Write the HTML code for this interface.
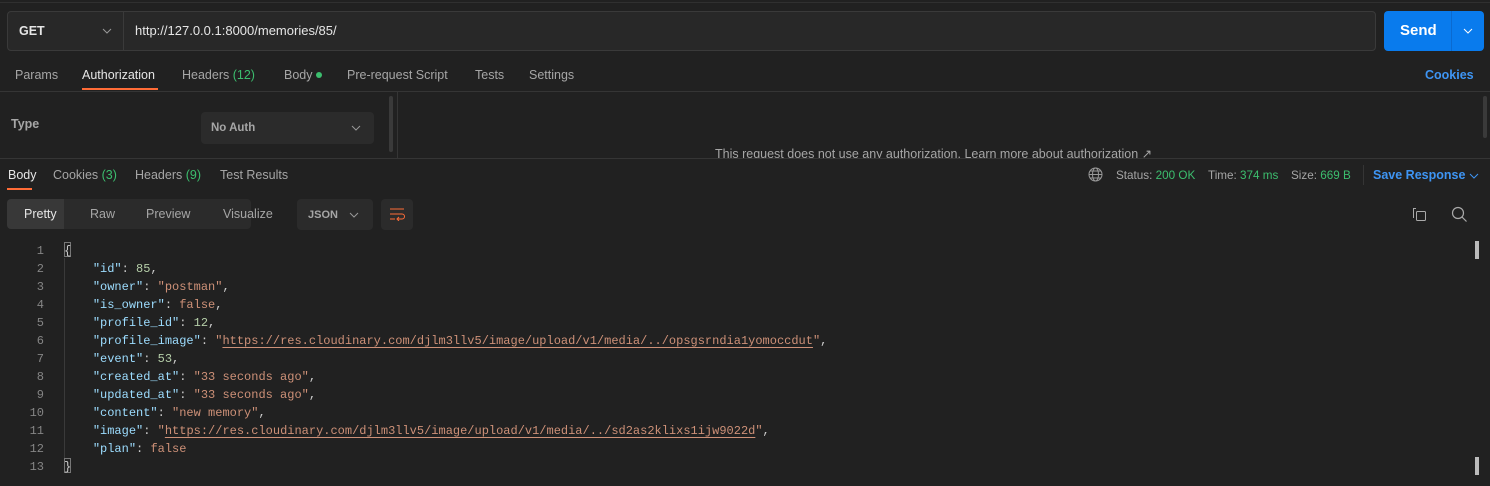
<!DOCTYPE html>
<html><head><meta charset="utf-8"><style>
*{box-sizing:border-box;margin:0;padding:0}
body{width:1490px;height:486px;background:#212121;font-family:"Liberation Sans",sans-serif;color:#a6a6a6;font-size:12px;position:relative;overflow:hidden}
.a{position:absolute;white-space:nowrap}
.g{color:#3cbe6e}
.code{font-family:"Liberation Mono",monospace;font-size:12px;line-height:18px}
.k{color:#9cdcfe}.s{color:#ce9178}.n{color:#b5cea8}.b{color:#ce9178}
.u{text-decoration:underline;text-decoration-color:#ce9178;text-underline-offset:3px}
</style></head><body>
<div class="a" style="left:0;top:2px;width:1490px;height:1px;background:#303030"></div>
<!-- URL bar -->
<div class="a" style="left:7px;top:11px;width:1369px;height:40px;border:1px solid #3a3a3a;border-radius:4px;background:#282828"></div>
<div class="a" style="left:123px;top:12px;width:1px;height:38px;background:#3a3a3a"></div>
<div class="a" style="left:19px;top:24px;font-weight:bold;color:#e6e6e6;font-size:12.5px">GET</div>
<svg class="a" style="left:102px;top:27px" width="10" height="8"><path d="M1 2l4 4 4-4" stroke="#999" fill="none"/></svg>
<div class="a" style="left:135px;top:23px;color:#e6e6e6;font-size:13px">http://127.0.0.1:8000/memories/85/</div>
<div class="a" style="left:1384px;top:11px;width:100px;height:40px;background:#097bed;border-radius:4px"></div>
<div class="a" style="left:1451px;top:11px;width:1px;height:40px;background:#0a6ad0"></div>
<div class="a" style="left:1400px;top:22px;color:#fff;font-weight:bold;font-size:15px">Send</div>
<svg class="a" style="left:1463px;top:27px" width="10" height="8"><path d="M1 2l4 4 4-4" stroke="#fff" fill="none"/></svg>
<!-- tabs -->
<div class="a" style="left:15px;top:68px;font-size:12.5px">Params</div>
<div class="a" style="left:82px;top:68px;font-size:12.5px;color:#e6e6e6">Authorization</div>
<div class="a" style="left:82px;top:88px;width:76px;height:2px;background:#ff6c37"></div>
<div class="a" style="left:182px;top:68px;font-size:12.5px">Headers <span class="g">(12)</span></div>
<div class="a" style="left:284px;top:68px;font-size:12.5px">Body</div>
<div class="a" style="left:316px;top:72px;width:6px;height:6px;border-radius:50%;background:#3cbe6e"></div>
<div class="a" style="left:347px;top:68px;font-size:12.5px">Pre-request Script</div>
<div class="a" style="left:475px;top:68px;font-size:12.5px">Tests</div>
<div class="a" style="left:529px;top:68px;font-size:12.5px">Settings</div>
<div class="a" style="left:1425px;top:68px;font-size:12.5px;color:#3e95f4;font-weight:bold">Cookies</div>
<div class="a" style="left:0;top:91px;width:1490px;height:1px;background:#353535"></div>
<!-- auth -->
<div class="a" style="left:11px;top:117px;font-size:12.5px;font-weight:bold;color:#a6a6a6">Type</div>
<div class="a" style="left:201px;top:112px;width:173px;height:32px;background:#2b2b2b;border-radius:4px"></div>
<div class="a" style="left:211px;top:122px;font-weight:bold;font-size:11.5px">No Auth</div>
<svg class="a" style="left:351px;top:124px" width="10" height="8"><path d="M1 2l4 4 4-4" stroke="#999" fill="none"/></svg>
<div class="a" style="left:389px;top:96px;width:4px;height:56px;background:#3a3a3a;border-radius:2px"></div>
<div class="a" style="left:397px;top:92px;width:1px;height:66px;background:#353535"></div>
<div class="a" style="left:1483px;top:96px;width:4px;height:42px;background:#3a3a3a;border-radius:2px"></div>
<div class="a" style="left:715px;top:147px;font-size:12.5px;height:11px;overflow:hidden;line-height:15px">This request does not use any authorization. Learn more about authorization ↗</div>
<div class="a" style="left:0;top:158px;width:1490px;height:1px;background:#353535"></div>
<!-- response tabs -->
<div class="a" style="left:8px;top:168px;font-size:12.5px;color:#e6e6e6">Body</div>
<div class="a" style="left:7px;top:188px;width:25px;height:2px;background:#ff6c37"></div>
<div class="a" style="left:53px;top:168px;font-size:12.5px">Cookies <span class="g">(3)</span></div>
<div class="a" style="left:135px;top:168px;font-size:12.5px">Headers <span class="g">(9)</span></div>
<div class="a" style="left:220px;top:168px;font-size:12.5px">Test Results</div>
<svg class="a" style="left:1088px;top:167px" width="15" height="15" viewBox="0 0 15 15"><g stroke="#999" fill="none"><circle cx="7.5" cy="7.5" r="6.5"/><ellipse cx="7.5" cy="7.5" rx="3" ry="6.5"/><path d="M1 7.5h13M2 4h11M2 11h11"/></g></svg>
<div class="a" style="left:1116px;top:169px;font-size:11.7px">Status: <span class="g">200 OK</span></div>
<div class="a" style="left:1208px;top:169px;font-size:11.7px">Time: <span class="g">374 ms</span></div>
<div class="a" style="left:1291px;top:169px;font-size:11.7px">Size: <span class="g">669 B</span></div>
<div class="a" style="left:1363px;top:165px;width:1px;height:20px;background:#353535"></div>
<div class="a" style="left:1373px;top:168px;font-size:12.5px;color:#3e95f4;font-weight:bold">Save Response</div>
<svg class="a" style="left:1469px;top:172px" width="10" height="8"><path d="M1 2l4 4 4-4" stroke="#3e95f4" fill="none"/></svg>
<!-- pretty bar -->
<div class="a" style="left:7px;top:199px;width:244px;height:30px;background:#2b2b2b;border-radius:4px"></div>
<div class="a" style="left:7px;top:199px;width:57px;height:30px;background:#383838;border-radius:4px 0 0 4px"></div>
<div class="a" style="left:24px;top:207px;font-size:12.5px;color:#e6e6e6">Pretty</div>
<div class="a" style="left:90px;top:207px;font-size:12.5px">Raw</div>
<div class="a" style="left:146px;top:207px;font-size:12.5px">Preview</div>
<div class="a" style="left:223px;top:207px;font-size:12.5px">Visualize</div>
<div class="a" style="left:297px;top:199px;width:76px;height:31px;background:#2b2b2b;border-radius:4px"></div>
<div class="a" style="left:308px;top:209px;font-weight:bold;font-size:11px">JSON</div>
<svg class="a" style="left:349px;top:211px" width="10" height="8"><path d="M1 2l4 4 4-4" stroke="#999" fill="none"/></svg>
<div class="a" style="left:381px;top:199px;width:32px;height:31px;background:#2b2b2b;border-radius:4px"></div>
<svg class="a" style="left:389px;top:207px" width="16" height="14"><g stroke="#ff6c37" fill="none"><path d="M1 2h14M1 7h12a2.5 2.5 0 0 1 0 5h-4M1 12h5M10 10l-2 2 2 2"/></g></svg>
<svg class="a" style="left:1412px;top:207px" width="15" height="15"><g stroke="#aaa" fill="none"><path d="M4 1.5H1.5V11"/><rect x="4.5" y="4.5" width="9" height="9" rx="1"/></g></svg>
<svg class="a" style="left:1451px;top:206px" width="17" height="17"><g stroke="#aaa" fill="none" stroke-width="1.2"><circle cx="7" cy="7" r="5.5"/><path d="M11 11l4.5 4.5"/></g></svg>
<!-- code -->
<div class="a code" style="left:22px;top:242px;width:22px;text-align:right;color:#858585">1<br>2<br>3<br>4<br>5<br>6<br>7<br>8<br>9<br>10<br>11<br>12<br>13</div>
<div class="a" style="left:64px;top:258px;width:1px;height:200px;background:#3a3a3a"></div>
<div class="a" style="left:64px;top:242px;width:7px;height:15px;border:1px solid #777"></div>
<div class="a" style="left:64px;top:458px;width:7px;height:15px;border:1px solid #777"></div>
<div class="a code" style="left:64px;top:242px;color:#ccc">{<br>
&nbsp;&nbsp;&nbsp;&nbsp;<span class="k">"id"</span>: <span class="n">85</span>,<br>
&nbsp;&nbsp;&nbsp;&nbsp;<span class="k">"owner"</span>: <span class="s">"postman"</span>,<br>
&nbsp;&nbsp;&nbsp;&nbsp;<span class="k">"is_owner"</span>: <span class="b">false</span>,<br>
&nbsp;&nbsp;&nbsp;&nbsp;<span class="k">"profile_id"</span>: <span class="n">12</span>,<br>
&nbsp;&nbsp;&nbsp;&nbsp;<span class="k">"profile_image"</span>: <span class="s">"<span class="u">https://res.cloudinary.com/djlm3llv5/image/upload/v1/media/../opsgsrndia1yomoccdut</span>"</span>,<br>
&nbsp;&nbsp;&nbsp;&nbsp;<span class="k">"event"</span>: <span class="n">53</span>,<br>
&nbsp;&nbsp;&nbsp;&nbsp;<span class="k">"created_at"</span>: <span class="s">"33 seconds ago"</span>,<br>
&nbsp;&nbsp;&nbsp;&nbsp;<span class="k">"updated_at"</span>: <span class="s">"33 seconds ago"</span>,<br>
&nbsp;&nbsp;&nbsp;&nbsp;<span class="k">"content"</span>: <span class="s">"new memory"</span>,<br>
&nbsp;&nbsp;&nbsp;&nbsp;<span class="k">"image"</span>: <span class="s">"<span class="u">https://res.cloudinary.com/djlm3llv5/image/upload/v1/media/../sd2as2klixs1ijw9022d</span>"</span>,<br>
&nbsp;&nbsp;&nbsp;&nbsp;<span class="k">"plan"</span>: <span class="b">false</span><br>
}</div>
<div class="a" style="left:1475px;top:241px;width:4px;height:18px;background:#bbb"></div>
<div class="a" style="left:1475px;top:457px;width:4px;height:18px;background:#bbb"></div>
</body></html>
